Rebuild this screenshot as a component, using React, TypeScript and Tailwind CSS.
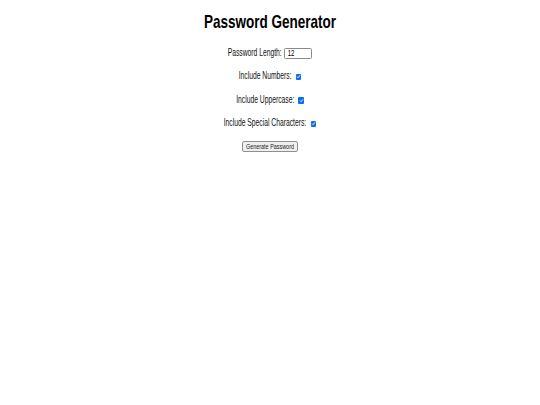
import React from "react";

function Check() {
  return (
    <span className="inline-flex w-[5.5px] h-[6.5px] rounded-[1px] bg-[#0a6fe8] items-center justify-center">
      <svg viewBox="0 0 10 10" className="w-[5px] h-[5px]">
        <path d="M2 5.2 L4.2 7.4 L8.2 2.6" fill="none" stroke="#fff" strokeWidth="1.8" />
      </svg>
    </span>
  );
}

function Label({ children }: { children: React.ReactNode }) {
  return (
    <span className="inline-block whitespace-nowrap text-[6.75px] leading-[6.75px] scale-y-[1.5] text-[#111]">
      {children}
    </span>
  );
}

export default function App() {
  return (
    <div className="w-[540px] h-[405px] bg-white flex flex-col items-center font-['Liberation_Sans',Arial,sans-serif] text-black">
      <h1 className="mt-[15.5px] h-[14px] flex items-center">
        <span className="inline-block whitespace-nowrap font-bold text-[13.5px] leading-[13.5px] scale-y-[1.3]">
          Password Generator
        </span>
      </h1>
      <div className="mt-[12px] h-[23.5px] flex items-center gap-[2px]">
        <Label>Password Length:</Label>
        <span className="w-[28.6px] h-[11px] border border-[#8a8a8a] rounded-[1.5px] bg-white flex items-center pl-[3px]">
          <span className="inline-block text-[6px] leading-[6px] scale-y-[1.4] text-black">12</span>
        </span>
      </div>
      <div className="h-[23.5px] flex items-center gap-[4.3px]">
        <Label>Include Numbers:</Label>
        <Check />
      </div>
      <div className="h-[23.5px] flex items-center gap-[4px]">
        <Label>Include Uppercase:</Label>
        <Check />
      </div>
      <div className="h-[23.5px] flex items-center gap-[4.6px]">
        <Label>Include Special Characters:</Label>
        <Check />
      </div>
      <button className="mt-[5.2px] h-[11.3px] w-[55.7px] flex items-center justify-center border border-[#8f8f8f] rounded-[2px] bg-[#efefef]">
        <span className="inline-block whitespace-nowrap text-[5.43px] leading-[5.43px] scale-y-[1.45] text-[#222]">
          Generate Password
        </span>
      </button>
    </div>
  );
}
